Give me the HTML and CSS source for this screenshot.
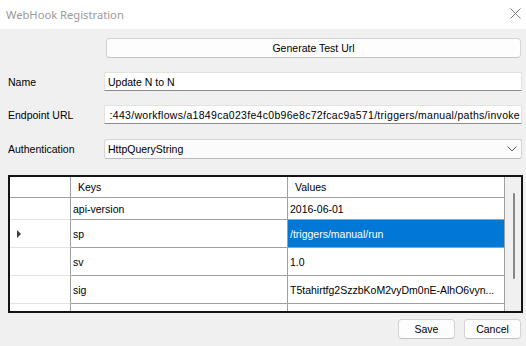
FILE: index.html
```html
<!DOCTYPE html>
<html>
<head>
<meta charset="utf-8">
<link rel="stylesheet" href="styles.css">
</head>
<body>
<div class="window">
  <div class="titlebar">
    <span class="title">WebHook Registration</span>
    <svg class="close" width="11" height="11" viewBox="0 0 11 11"><path d="M0.5 0.5 L10.5 10.5 M10.5 0.5 L0.5 10.5" stroke="#7a7a7a" stroke-width="1" fill="none"/></svg>
  </div>
  <div class="content">
    <div class="gen-row"><button class="btn gen">Generate Test Url</button></div>
    <div class="field-row first">
      <span class="label">Name</span>
      <div class="textbox">Update N to N</div>
    </div>
    <div class="field-row">
      <span class="label">Endpoint URL</span>
      <div class="textbox url"><span class="urltext">:443/workflows/a1849ca023fe4c0b96e8c72fcac9a571/triggers/manual/paths/invoke</span></div>
    </div>
    <div class="field-row auth">
      <span class="label">Authentication</span>
      <div class="combo"><span>HttpQueryString</span>
        <svg class="chev" width="10" height="6" viewBox="0 0 10 6"><path d="M0.5 0.5 L5 5 L9.5 0.5" stroke="#555" stroke-width="1" fill="none"/></svg>
      </div>
    </div>
    <div class="grid">
      <div class="grid-main">
        <div class="grow r-h"><div class="rh"></div><div class="c hd">Keys</div><div class="c hd">Values</div></div>
        <div class="grow r-1"><div class="rh"></div><div class="c">api-version</div><div class="c">2016-06-01</div></div>
        <div class="grow r-n"><div class="rh"><span class="arrow"></span></div><div class="c">sp</div><div class="c sel">/triggers/manual/run</div></div>
        <div class="grow r-n"><div class="rh"></div><div class="c">sv</div><div class="c">1.0</div></div>
        <div class="grow r-n"><div class="rh"></div><div class="c">sig</div><div class="c">T5tahirtfg2SzzbKoM2vyDm0nE-AlhO6vyn...</div></div>
        <div class="grow r-last"><div class="rh"></div><div class="c"></div><div class="c"></div></div>
      </div>
      <div class="scroll"><div class="thumb"></div></div>
    </div>
    <div class="actions">
      <button class="btn act">Save</button>
      <button class="btn act">Cancel</button>
    </div>
  </div>
</div>
</body>
</html>
```

FILE: styles.css
```css
html, body {
  margin: 0;
  padding: 0;
}
body {
  width: 526px;
  height: 346px;
  overflow: hidden;
  font-family: "Liberation Sans", Arial, sans-serif;
  font-size: 10.5px;
  color: #000;
}
.window {
  width: 526px;
  height: 346px;
  display: flex;
  flex-direction: column;
}
.titlebar {
  height: 29px;
  background: #fff;
  display: flex;
  align-items: center;
  justify-content: space-between;
  padding: 0 5px 0 6px;
  flex: none;
}
.title {
  font-family: "Noto Sans", "Open Sans", sans-serif;
  font-size: 11.2px;
  color: #9a9a9a;
  margin-top: -1px;
}
.close {
  display: block;
  margin-top: -2px;
}
.content {
  flex: 1;
  background: #f0f0f0;
  display: flex;
  flex-direction: column;
}
.btn {
  font-family: "Liberation Sans", Arial, sans-serif;
  font-size: 10.5px;
  color: #000;
  background: #fdfdfd;
  border: 1px solid #d3d3d3;
  border-bottom-color: #c2c2c2;
  border-radius: 4px;
  padding: 0;
  margin: 0;
  box-sizing: border-box;
}
.gen-row {
  margin-top: 9px;
  padding-left: 106px;
  display: flex;
}
.gen {
  width: 415px;
  height: 20px;
}
.field-row {
  display: flex;
  align-items: center;
  margin-top: 14px;
}
.field-row.auth {
  margin-top: 15px;
}
.label {
  width: 104px;
  flex: none;
  padding-left: 8px;
  box-sizing: border-box;
}
.textbox {
  width: 418px;
  flex: none;
  height: 19px;
  box-sizing: border-box;
  background: #fff;
  border: 1px solid #e2e2e2;
  border-bottom-color: #8c8c8c;
  display: flex;
  align-items: center;
  padding-left: 3px;
  white-space: nowrap;
  overflow: hidden;
}
.textbox.url {
  justify-content: flex-end;
  padding-left: 0;
  padding-right: 1px;
}
.urltext {
  letter-spacing: 0.3px;
}
.combo {
  width: 418px;
  flex: none;
  height: 20px;
  box-sizing: border-box;
  background: #fbfbfb;
  border: 1px solid #d6d6d6;
  border-bottom-color: #bdbdbd;
  border-radius: 3px;
  display: flex;
  align-items: center;
  justify-content: space-between;
  padding: 0 4px 0 3px;
}
.chev {
  display: block;
}
.grid {
  margin-top: 16px;
  margin-left: 8px;
  width: 515px;
  height: 138px;
  box-sizing: border-box;
  border: 2px solid #141414;
  display: flex;
  background: #f0f0f0;
}
.grid-main {
  width: 495px;
  display: flex;
  flex-direction: column;
  background: #fff;
}
.grow {
  display: flex;
  flex: none;
}
.r-h { height: 21px; }
.r-1 { height: 22px; }
.r-n { height: 28px; }
.r-last { flex: 1; }
.rh {
  width: 61px;
  box-sizing: border-box;
  border-right: 1px solid #a0a0a0;
  border-bottom: 1px solid #e3e3e3;
  display: flex;
  align-items: center;
  padding-left: 7px;
}
.r-h .rh {
  border-bottom-color: #a0a0a0;
}
.c {
  width: 217px;
  box-sizing: border-box;
  border-right: 1px solid #a0a0a0;
  border-bottom: 1px solid #a0a0a0;
  display: flex;
  align-items: center;
  padding-left: 2px;
  white-space: nowrap;
  overflow: hidden;
}
.c.hd {
  padding-left: 7px;
}
.r-last .c, .r-last .rh {
  border-bottom: none;
}
.c.sel {
  background: #0078d7;
  color: #fff;
  border-bottom-color: #a0a0a0;
}
.arrow {
  width: 0;
  height: 0;
  border-top: 4px solid transparent;
  border-bottom: 4px solid transparent;
  border-left: 4px solid #3c3c3c;
  margin-top: 1px;
}
.scroll {
  width: 16px;
  background: #f0f0f0;
  padding-top: 16px;
  box-sizing: border-box;
}
.thumb {
  width: 2px;
  height: 86px;
  margin-left: 8px;
  background: #878787;
  border-radius: 1px;
}
.actions {
  display: flex;
  justify-content: flex-end;
  gap: 9px;
  padding-right: 5px;
  margin-top: 6px;
}
.act {
  width: 57px;
  height: 20px;
}
```
